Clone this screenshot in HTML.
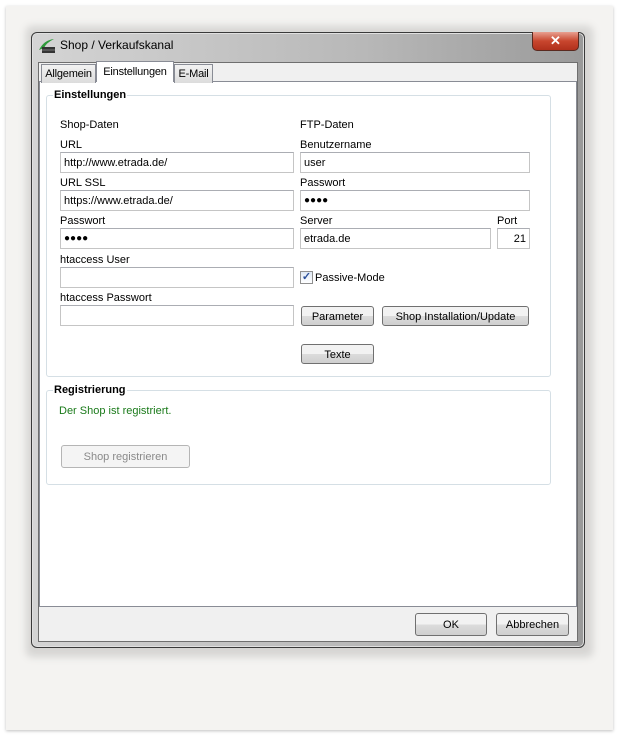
<!DOCTYPE html>
<html><head><meta charset="utf-8"><style>
*{box-sizing:border-box;margin:0;padding:0}
body{width:619px;height:737px;background:#fff;position:relative;overflow:hidden;font-family:"Liberation Sans",sans-serif;font-size:11px;color:#000}
.a{position:absolute;white-space:nowrap}
.paper{left:6px;top:6px;width:607px;height:724px;background:#f4f3f1;box-shadow:0 1px 3px rgba(0,0,0,.25)}
.shadow{left:26px;top:26px;width:567px;height:631px;background:rgba(0,0,0,.12);filter:blur(4px);border-radius:6px}
.win{left:31px;top:32px;width:554px;height:616px;border:1px solid #3a3a3a;border-radius:6px;background:linear-gradient(90deg,#d4d4d4,#b8b8b8 60%,#9a9a9a);box-shadow:inset 0 0 0 1px #e0e0e0}
.client{left:38px;top:62px;width:540px;height:580px;background:#f0f0f0;border:1px solid #6f6f6f}
.pane{left:39px;top:81px;width:538px;height:526px;background:#fff;border:1px solid #898c95}
.tab{height:19px;border:1px solid #898c95;border-bottom:none;background:linear-gradient(#f2f2f2,#dcdcdc);padding:3px 0 0;text-align:center;font-size:11px;letter-spacing:-0.2px}
.group{border:1px solid #d5dfe5;border-radius:3px}
.gt{background:#fff;font-weight:bold;font-size:11px;padding:0 1px}
.in{height:21px;border:1px solid #c5c5c5;border-top-color:#abadb3;background:#fff;padding:4px 0 0 3px;font-size:11px}
.btn{height:20px;border:1px solid #707070;border-radius:3px;background:linear-gradient(#f2f2f2 50%,#dcdcdc 50%,#cfcfcf);text-align:center;padding-top:4px;font-size:11px}
.dots{letter-spacing:0px;font-size:10px;padding-top:4px}
</style></head><body>
<div class="a paper"></div>
<div class="a shadow"></div>
<div class="a win"></div>
<svg class="a" style="left:38px;top:38px" width="18" height="16"><path d="M1 12 Q6 2 16 1 Q8 5 6 10Z" fill="#2e9a3a"/><rect x="4" y="9" width="13" height="6" fill="#333"/><line x1="4" y1="12" x2="17" y2="12" stroke="#777"/></svg>
<div class="a" style="left:60px;top:38px;font-size:12px;color:#000">Shop / Verkaufskanal</div>
<div class="a" style="left:532px;top:32px;width:47px;height:19px;border:1px solid #5a2a20;border-top:none;border-radius:0 0 5px 5px;background:linear-gradient(#e8a090,#c8462e 50%,#b0301c);color:#fff;font-weight:bold;text-align:center;font-size:13px;line-height:17px">✕</div>
<div class="a client"></div>
<div class="a pane"></div>
<div class="a tab" style="left:41px;top:64px;width:55px">Allgemein</div>
<div class="a tab" style="left:96px;top:61px;width:78px;height:21px;background:#fff;padding-top:4px">Einstellungen</div>
<div class="a tab" style="left:174px;top:64px;width:39px">E-Mail</div>

<div class="a group" style="left:46px;top:95px;width:505px;height:282px"></div>
<div class="a gt" style="left:53px;top:89px">Einstellungen</div>
<div class="a" style="left:60px;top:119px">Shop-Daten</div>
<div class="a" style="left:300px;top:119px">FTP-Daten</div>
<div class="a" style="left:60px;top:139px">URL</div>
<div class="a in" style="left:60px;top:152px;width:234px">http://www.etrada.de/</div>
<div class="a" style="left:60px;top:177px">URL SSL</div>
<div class="a in" style="left:60px;top:190px;width:234px">https://www.etrada.de/</div>
<div class="a" style="left:60px;top:215px">Passwort</div>
<div class="a in dots" style="left:60px;top:228px;width:234px">●●●●</div>
<div class="a" style="left:60px;top:254px">htaccess User</div>
<div class="a in" style="left:60px;top:267px;width:234px"></div>
<div class="a" style="left:60px;top:292px">htaccess Passwort</div>
<div class="a in" style="left:60px;top:305px;width:234px"></div>

<div class="a" style="left:300px;top:139px">Benutzername</div>
<div class="a in" style="left:300px;top:152px;width:230px">user</div>
<div class="a" style="left:300px;top:177px">Passwort</div>
<div class="a in dots" style="left:300px;top:190px;width:230px">●●●●</div>
<div class="a" style="left:300px;top:215px">Server</div>
<div class="a in" style="left:300px;top:228px;width:191px">etrada.de</div>
<div class="a" style="left:497px;top:215px">Port</div>
<div class="a in" style="left:497px;top:228px;width:33px;text-align:right;padding-right:3px">21</div>
<div class="a" style="left:300px;top:271px;width:13px;height:13px;border:1px solid #8f8f8f;background:linear-gradient(#dfe9f5,#fff);color:#2a4f9a;font-size:11px;line-height:11px;text-align:center;font-weight:bold">✓</div>
<div class="a" style="left:315px;top:272px">Passive-Mode</div>
<div class="a btn" style="left:301px;top:306px;width:73px">Parameter</div>
<div class="a btn" style="left:382px;top:306px;width:147px">Shop Installation/Update</div>
<div class="a btn" style="left:301px;top:344px;width:73px">Texte</div>

<div class="a group" style="left:46px;top:390px;width:505px;height:95px"></div>
<div class="a gt" style="left:53px;top:384px">Registrierung</div>
<div class="a" style="left:59px;top:405px;color:#1a7a1a">Der Shop ist registriert.</div>
<div class="a" style="left:61px;top:445px;width:129px;height:23px;border:1px solid #b5b5b5;border-radius:3px;background:#f4f4f4;color:#8a8a8a;text-align:center;padding-top:5px">Shop registrieren</div>

<div class="a btn" style="left:415px;top:613px;width:72px;height:23px;padding-top:5px">OK</div>
<div class="a btn" style="left:496px;top:613px;width:73px;height:23px;padding-top:5px">Abbrechen</div>
</body></html>
